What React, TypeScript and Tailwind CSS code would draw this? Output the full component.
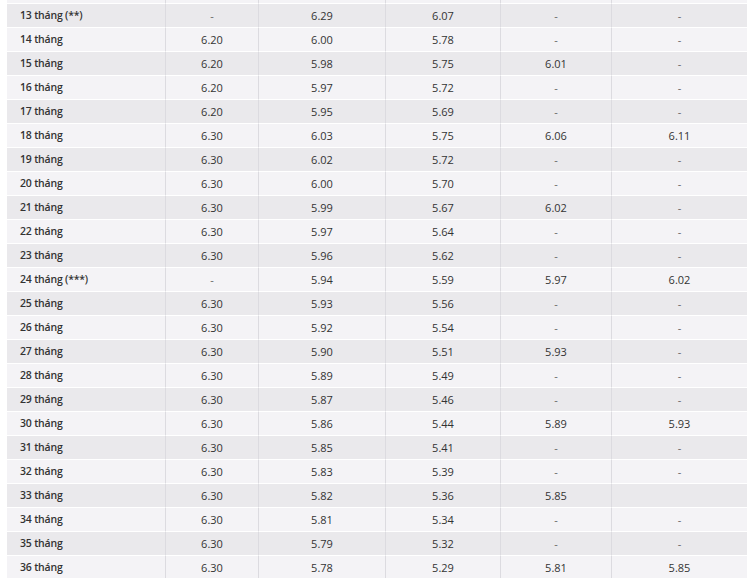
import React from "react";

type Row = [string, string, string, string, string, string];

const rows: Row[] = [
  ["13 tháng (**)", "-", "6.29", "6.07", "-", "-"],
  ["14 tháng", "6.20", "6.00", "5.78", "-", "-"],
  ["15 tháng", "6.20", "5.98", "5.75", "6.01", "-"],
  ["16 tháng", "6.20", "5.97", "5.72", "-", "-"],
  ["17 tháng", "6.20", "5.95", "5.69", "-", "-"],
  ["18 tháng", "6.30", "6.03", "5.75", "6.06", "6.11"],
  ["19 tháng", "6.30", "6.02", "5.72", "-", "-"],
  ["20 tháng", "6.30", "6.00", "5.70", "-", "-"],
  ["21 tháng", "6.30", "5.99", "5.67", "6.02", "-"],
  ["22 tháng", "6.30", "5.97", "5.64", "-", "-"],
  ["23 tháng", "6.30", "5.96", "5.62", "-", "-"],
  ["24 tháng (***)", "-", "5.94", "5.59", "5.97", "6.02"],
  ["25 tháng", "6.30", "5.93", "5.56", "-", "-"],
  ["26 tháng", "6.30", "5.92", "5.54", "-", "-"],
  ["27 tháng", "6.30", "5.90", "5.51", "5.93", "-"],
  ["28 tháng", "6.30", "5.89", "5.49", "-", "-"],
  ["29 tháng", "6.30", "5.87", "5.46", "-", "-"],
  ["30 tháng", "6.30", "5.86", "5.44", "5.89", "5.93"],
  ["31 tháng", "6.30", "5.85", "5.41", "-", "-"],
  ["32 tháng", "6.30", "5.83", "5.39", "-", "-"],
  ["33 tháng", "6.30", "5.82", "5.36", "5.85", ""],
  ["34 tháng", "6.30", "5.81", "5.34", "-", "-"],
  ["35 tháng", "6.30", "5.79", "5.32", "-", "-"],
  ["36 tháng", "6.30", "5.78", "5.29", "5.81", "5.85"],
];

const cols = "grid grid-cols-[158px_93px_127px_115px_111px_136px]";

const App: React.FC = () => {
  return (
    <div
      className="min-h-[578px] w-[754px] overflow-hidden bg-white pl-[7px] text-[11px] text-[#333]"
      style={{ fontFamily: '"Open Sans", "Noto Sans", sans-serif' }}
    >
      {/* tail of the row scrolled off above */}
      <div className={`${cols} h-1`}>
        <div className="border-b border-white bg-[#f4f3f6]" />
        {[0, 1, 2, 3, 4].map((i) => (
          <div key={i} className="border-b border-l border-b-white border-l-[#dcdbe0] bg-[#f4f3f6]" />
        ))}
      </div>

      {rows.map((row, idx) => {
        const bg = idx % 2 === 0 ? "bg-[#eae9ec]" : "bg-[#f4f3f6]";
        return (
          <div key={row[0]} className={`${cols} h-6`}>
            <div className={`flex items-center border-b border-white pl-[13px] pt-px text-[10.5px] font-semibold tracking-[-0.2px] ${bg}`}>
              {row[0]}
            </div>
            {row.slice(1).map((v, i) => (
              <div
                key={i}
                className={`flex items-center justify-center border-b border-l border-b-white border-l-[#dcdbe0] pt-px ${bg} ${
                  v === "-" ? "text-[#666]" : ""
                }`}
              >
                {v}
              </div>
            ))}
          </div>
        );
      })}
    </div>
  );
};

export default App;
